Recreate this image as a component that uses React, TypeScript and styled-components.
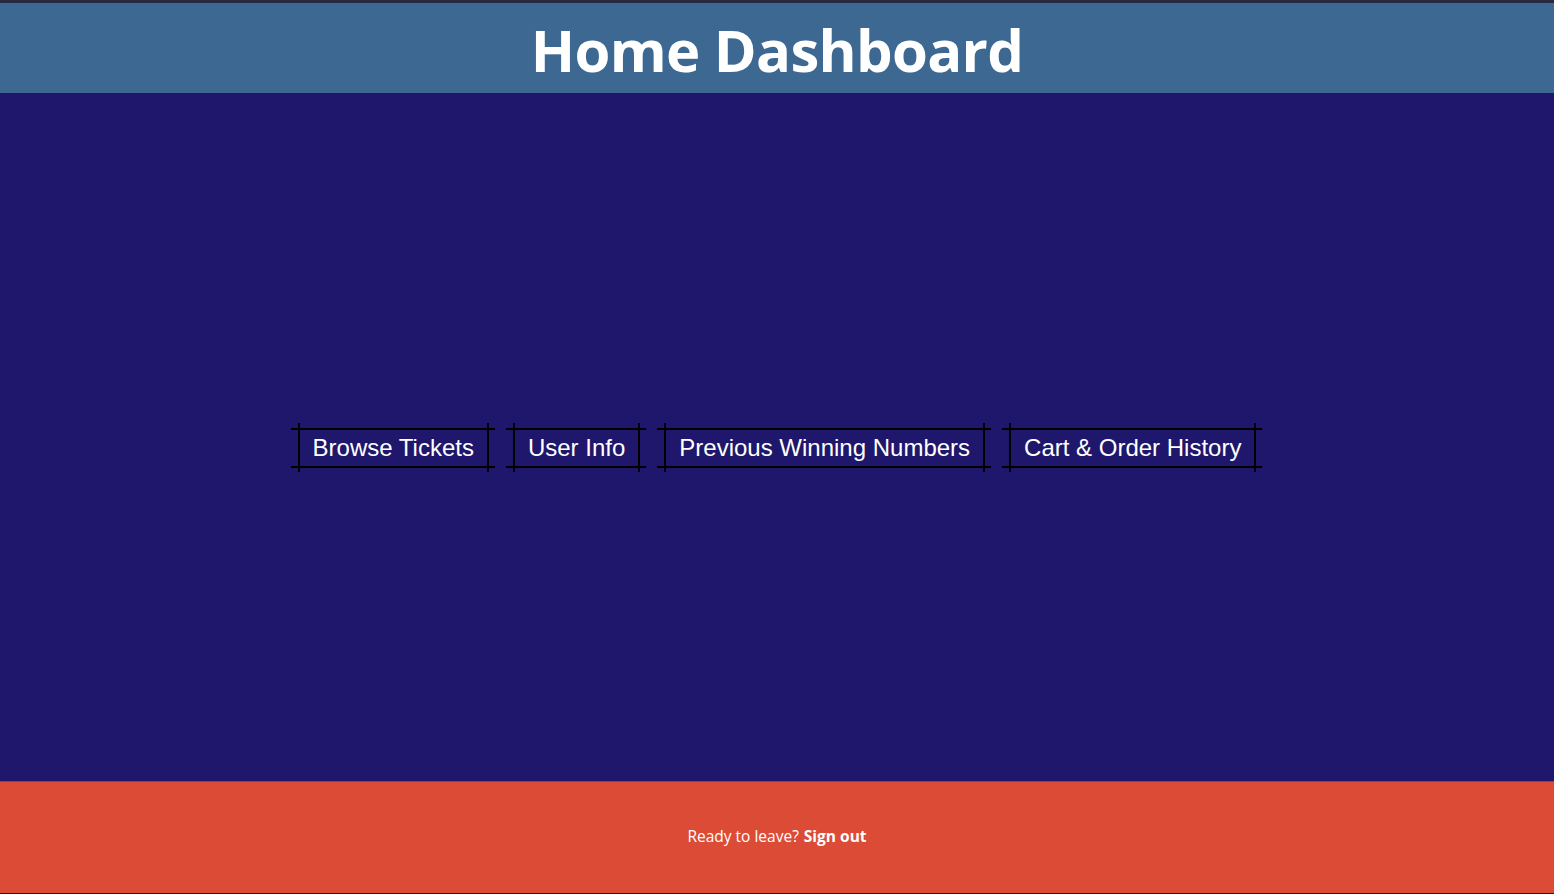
import React from "react";
import styled, { createGlobalStyle } from "styled-components";

const GlobalStyle = createGlobalStyle`
  html, body { margin: 0; padding: 0; }
  body { background: #1e176b; }
  * { box-sizing: border-box; }
`;

const Page = styled.div`
  display: flex;
  flex-direction: column;
  height: 894px;
  border-top: 3px solid #262a42;
  border-bottom: 1px solid #1c1a2e;
`;

const Header = styled.header`
  height: 90px;
  background: #3d6891;
  display: flex;
  align-items: center;
  justify-content: center;
  padding-top: 4px;
`;

const Title = styled.h1`
  margin: 0;
  color: #ffffff;
  font-family: "Open Sans", "Noto Sans", sans-serif;
  font-weight: 700;
  font-size: 58px;
  letter-spacing: -0.7px;
  line-height: 1;
`;

const Main = styled.main`
  flex: 1;
  background: #1e176b;
  display: flex;
  align-items: center;
  justify-content: center;
  gap: 24px;
  padding-top: 22px;
`;

const NavButton = styled.button`
  position: relative;
  background: transparent;
  border: 2px solid #000;
  color: #ffffff;
  font-family: "Liberation Sans", Arial, sans-serif;
  font-size: 24px;
  padding: 4px 13px 5px;
  line-height: 27px;
  cursor: pointer;

  &::before {
    content: "";
    position: absolute;
    left: -9px;
    right: -8px;
    top: -2px;
    bottom: -2px;
    border-top: 2px solid #000;
    border-bottom: 2px solid #000;
  }
  &::after {
    content: "";
    position: absolute;
    top: -7px;
    bottom: -6px;
    left: -2px;
    right: -2px;
    border-left: 2px solid #000;
    border-right: 2px solid #000;
  }
`;

const Footer = styled.footer`
  height: 112px;
  background: #dc4b35;
  border-top: 1px solid #a33548;
  display: flex;
  align-items: center;
  justify-content: center;
  color: #ffffff;
  font-family: "Open Sans", "Noto Sans", sans-serif;
  font-size: 15.5px;
  padding-bottom: 3px;
`;

const SignOut = styled.a`
  color: #ffffff;
  font-weight: 700;
  text-decoration: none;
  margin-left: 5px;
  cursor: pointer;
`;

const items = ["Browse Tickets", "User Info", "Previous Winning Numbers", "Cart & Order History"];

export default function App() {
  return (
    <>
      <GlobalStyle />
      <Page>
        <Header>
          <Title>Home Dashboard</Title>
        </Header>
        <Main>
          {items.map((t) => (
            <NavButton key={t}>{t}</NavButton>
          ))}
        </Main>
        <Footer>
          <span>Ready to leave?</span>
          <SignOut>Sign out</SignOut>
        </Footer>
      </Page>
    </>
  );
}
